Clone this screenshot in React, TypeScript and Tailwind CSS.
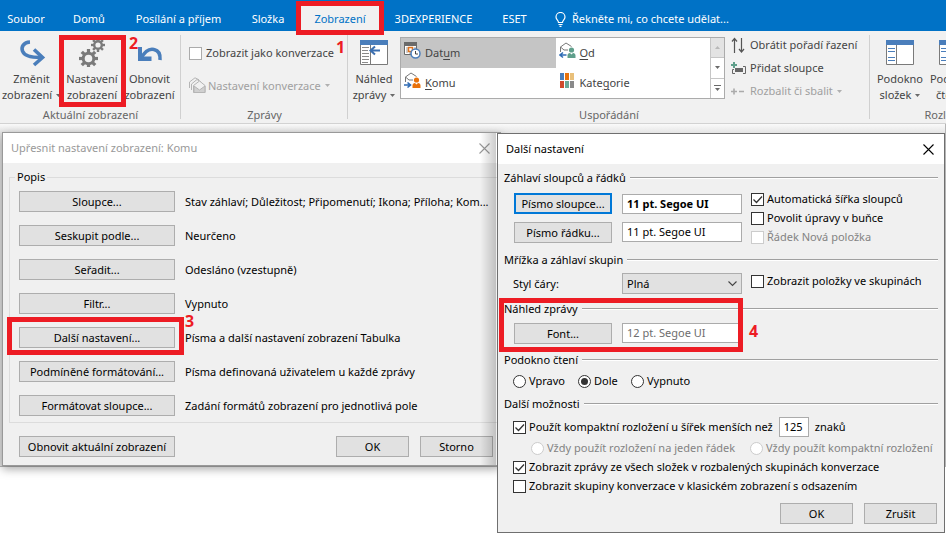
import * as React from "react";
import clsx from "clsx";

/* ---------- icons ---------- */

function Caret({ className = "fill-[#6a6a6a]" }: { className?: string }) {
  return (
    <svg width="5" height="3" viewBox="0 0 5 3" className={clsx("shrink-0", className)}>
      <path d="M0 0h5L2.5 3z" />
    </svg>
  );
}

function Gear({ cx, cy, r, hole }: { cx: number; cy: number; r: number; hole: number }) {
  const body = (r * 0.72 + hole) / 2;
  return (
    <g transform={`translate(${cx} ${cy})`}>
      <circle r={body} fill="none" stroke="#7a7a7a" strokeWidth={r * 0.72 - hole} />
      {[0, 45, 90, 135, 180, 225, 270, 315].map((a) => (
        <rect key={a} x={-r * 0.17} y={-r} width={r * 0.34} height={r * 0.4} fill="#7a7a7a" transform={`rotate(${a})`} />
      ))}
    </g>
  );
}

const ChangeIcon = () => (
  <svg width="28" height="28" viewBox="0 0 28 28" fill="none" stroke="#4a7ebb" strokeWidth="3.6">
    <path d="M12 3C5.500 3.300 3 8 4.500 12c1.500 4.500 7 6.500 18 6.500" />
    <path d="M16 10.500l8.500 8-8.500 7.500" />
  </svg>
);

const GearsIcon = () => (
  <svg width="28" height="28" viewBox="0 0 28 28">
    <Gear cx={20} cy={6} r={7} hole={2.6} />
    <Gear cx={10.5} cy={19.5} r={9.5} hole={3.8} />
  </svg>
);

const ResetIcon = () => (
  <svg width="28" height="28" viewBox="0 0 28 28" fill="none">
    <path d="M2 8h4v9.500h9.500V22H2z" fill="#4a7ebb" />
    <path d="M5 19.500C9 12 14 9.500 18 10.500c4.500 1 6.500 5 6 10.500" stroke="#4a7ebb" strokeWidth="3.6" />
  </svg>
);

const PreviewIcon = () => (
  <svg width="28" height="28" viewBox="0 0 28 28">
    <path d="M.5 1.500h27v24H.5z" fill="#fff" stroke="#7a7a7a" />
    <path d="M0 1h28v5H0z" fill="#4a7ebb" />
    <path d="M10.500 6v20" stroke="#7a7a7a" />
    <path d="M2 8.500h7M2 11.500h6M2 14.500h7M2 17.500h7M2 20.500h7M2 23.500h6" stroke="#8a8a8a" />
    <path d="M20 11.500h-9M15 7.500l-4.500 4 4.500 4" fill="none" stroke="#3b6fb0" strokeWidth="2" />
  </svg>
);

const PaneIcon = () => (
  <svg width="28" height="28" viewBox="0 0 28 28">
    <path d="M.5 1.500h27v24H.5z" fill="#fff" stroke="#7a7a7a" />
    <path d="M0 1h28v5H0z" fill="#4a7ebb" />
    <path d="M10.500 6v20" stroke="#7a7a7a" />
    <path d="M2 9.500h7M2 12.500h7M2 18.500h7M2 21.500h7" stroke="#4a7ebb" />
  </svg>
);

const DateIcon = () => (
  <svg width="17" height="17" viewBox="0 0 17 17">
    <path d="M.5.5h12v12H.5z" fill="#fff" stroke="#6a6a6a" />
    <path d="M0 0h13v4H0z" fill="#6a6a6a" />
    <path d="M2 6h2M2 8h2M2 10h2M10 6h2M5 11h3" stroke="#9a9a9a" />
    <path d="M4.500 5.500h4v4h-4z" fill="#fff" stroke="#e0721c" strokeWidth="1.5" />
    <circle cx="11.5" cy="11.5" r="4.5" fill="#fff" stroke="#4a7ebb" strokeWidth="1.5" />
    <path d="M11.500 9v3H14" fill="none" stroke="#444" />
  </svg>
);

function MailPerson({ color, incoming }: { color: string; incoming?: boolean }) {
  return (
    <svg width="17" height="17" viewBox="0 0 17 17" fill="none">
      <path d="M1.500 10V5L7 1l5.500 3.500M1.500 5L5 8h4" stroke="#777" />
      {incoming ? (
        <path d="M7.500 13H1M4 10.500L1 13l3 2.500" stroke="#2f6cb5" strokeWidth="1.6" />
      ) : (
        <path d="M0 13h6.500M3.500 10.500l3 2.500-3 2.500" stroke="#2f6cb5" strokeWidth="1.6" />
      )}
      <circle cx="12.5" cy="8" r="2.6" fill={color} />
      <path d="M8.500 16v-2.500c0-1.500 1-2.500 2.500-2.500l1.500 1.500L14 11c1.500 0 2.500 1 2.500 2.500V16z" fill={color} />
    </svg>
  );
}

const CategoryIcon = () => (
  <svg width="17" height="17" viewBox="0 0 17 17">
    <path d="M1 1h4v7H1z" fill="#4a7ebb" />
    <path d="M6 1h4v7H6z" fill="#e8720c" />
    <path d="M11 1h4v7h-4z" fill="#e9c07a" />
    <path d="M1 9h4v7H1z" fill="#cf4a2c" />
    <path d="M6 9h4v7H6z" fill="#6aa896" />
    <path d="M11 9h4v7h-4z" fill="#8a8a8a" />
  </svg>
);

const ConversationIcon = () => (
  <svg width="17" height="17" viewBox="0 0 17 17" fill="none" stroke="#b5b5b5">
    <path d="M.5 11V5L6 .8l4 2M2.500 13V7L8 2.500l4 2.500" />
    <path d="M4.500 8.500L10.500 4l5.500 4.500v7H4.500z" fill="#f1f1f1" />
    <path d="M5 9l5.500 4L16 9v6.500H5z" fill="#d0d0d0" />
  </svg>
);

const ReverseIcon = () => (
  <svg width="14" height="17" viewBox="0 0 14 17" fill="none" stroke="#555" strokeWidth="1.2">
    <path d="M3.500 16V1.500M1 4.500l2.500-3 2.500 3M10.500 1v14M8 12l2.500 3 2.500-3" />
  </svg>
);

const AddColumnIcon = () => (
  <svg width="16" height="15" viewBox="0 0 16 15" fill="none">
    <path d="M3 8.500H1.500v4H4M12 5.500h2.500v7H12" stroke="#666" />
    <path d="M4 7h8v4H4z" fill="#666" />
    <path d="M3 1v6M0 4h6" stroke="#5f9f8b" strokeWidth="2" />
  </svg>
);

const ExpandIcon = () => (
  <svg width="14" height="7" viewBox="0 0 14 7" stroke="#ababab" strokeWidth="1.6">
    <path d="M0 3.500h6M3 .5v6M8 3.500h5" />
  </svg>
);

const Bulb = () => (
  <svg width="11" height="15" viewBox="0 0 11 15" fill="none" stroke="#fff" strokeWidth="1.2">
    <path d="M3.500 10.500c0-2-2.500-2.700-2.500-5.500a4.400 4.400 0 0 1 9 0c0 2.800-2.500 3.500-2.500 5.500zM3.500 12.500h4M4.500 14.300h2" />
  </svg>
);

const Cross = ({ color }: { color: string }) => (
  <svg width="11" height="11" viewBox="0 0 11 11" fill="none" stroke={color} strokeWidth="1.1">
    <path d="M.5.5l10 10M10.500.5l-10 10" />
  </svg>
);

/* ---------- ribbon ---------- */

const TABS = [
  { label: "Soubor", w: "w-[52px] mr-1.5" },
  { label: "Domů", w: "w-[62px]" },
  { label: "Posílání a příjem", w: "w-[117px]" },
  { label: "Složka", w: "w-[62px]" },
  { label: "Zobrazení", w: "w-[82px]", active: true },
  { label: "3DEXPERIENCE", w: "w-[105px]" },
  { label: "ESET", w: "w-[57px]" },
];

function Mark({ n, className }: { n: string; className: string }) {
  return <span className={clsx("absolute z-10 text-[16px] leading-4 font-bold text-[#ed1c24]", className)}>{n}</span>;
}

function Frame({ className }: { className: string }) {
  return <div className={clsx("pointer-events-none absolute z-10 border-5 border-[#ed1c24]", className)} />;
}

function BigButton({ icon, top, bottom, caret, className, children }: {
  icon: React.ReactNode; top: string; bottom: string; caret?: boolean; className: string; children?: React.ReactNode;
}) {
  return (
    <div className={clsx("relative flex shrink-0 justify-center", className)}>
      <button className="flex flex-col items-center whitespace-nowrap">
        <span className="mb-1 h-7">{icon}</span>
        <span>{top}</span>
        <span className="flex items-center gap-1">
          {bottom}
          {caret && <Caret />}
        </span>
      </button>
      {children}
    </div>
  );
}

function Group({ label, className, children }: { label: string; className: string; children: React.ReactNode }) {
  return (
    <section className={clsx("relative flex shrink-0 flex-col", className)}>
      <div className="flex h-[76px]">{children}</div>
      <div className="h-4 text-center text-[#666]">{label}</div>
      <span className="absolute top-1 right-0 h-[84px] w-px bg-[#d0d0d0]" />
    </section>
  );
}

function GalleryItem({ icon, pre = "", hot = "", post, active }: {
  icon: React.ReactNode; pre?: string; hot?: string; post: string; active?: boolean;
}) {
  return (
    <button className={clsx("flex items-center gap-1 pl-[3px] text-left", active && "bg-[#c5c5c5]")}>
      <span className="pb-1.5">{icon}</span>
      <span>{pre}<u className="underline-offset-2">{hot}</u>{post}</span>
    </button>
  );
}

function Ribbon() {
  return (
    <header className="relative text-[#444]">
      <nav className="flex h-[31px] items-end overflow-hidden bg-[#0072c6] text-white">
        {TABS.map((t) => (
          <button key={t.label} className={clsx("h-[26px] shrink-0 pt-0.5 whitespace-nowrap", t.w, t.active && "bg-[#f1f1f1] text-[#0072c6]")}>
            {t.label}
          </button>
        ))}
        <button className="flex h-[26px] items-center gap-1.5 pt-0.5 pl-3 whitespace-nowrap">
          <Bulb /> Řekněte mi, co chcete udělat...
        </button>
      </nav>
      <Frame className="top-px left-[296px] h-[34px] w-[88px]" />

      <div className="flex overflow-hidden border-b border-[#d2d2d2] bg-[#f1f1f1]">
        <Group label="Aktuální zobrazení" className="w-[181px]">
          <BigButton icon={<ChangeIcon />} top="Změnit" bottom="zobrazení" caret className="w-[63px] pt-2" />
          <BigButton icon={<GearsIcon />} top="Nastavení" bottom="zobrazení" className="w-[58px] pt-2">
            <Frame className="top-1 -left-1 h-[72px] w-[67px]" />
          </BigButton>
          <BigButton icon={<ResetIcon />} top="Obnovit" bottom="zobrazení" className="w-[57px] pt-2">
            <Mark n="2" className="top-1 left-2" />
          </BigButton>
        </Group>

        <Group label="Zprávy" className="w-[167px]">
          <div className="relative flex flex-col gap-4 pt-3.5 pl-2">
            <label className="flex items-center gap-1 whitespace-nowrap">
              <input type="checkbox" className="size-[13px] appearance-none border border-[#ababab] bg-white" />
              Zobrazit jako konverzace
            </label>
            <button disabled className="flex items-center gap-0.5 whitespace-nowrap text-[#a0a0a0]">
              <ConversationIcon /> Nastavení konverzace <Caret className="ml-0.5 fill-[#b0b0b0]" />
            </button>
            <Mark n="1" className="top-2 left-[155px]" />
          </div>
        </Group>

        <Group label="Uspořádání" className="w-[522px]">
          <BigButton icon={<PreviewIcon />} top="Náhled" bottom="zprávy" caret className="w-[52px] pt-2" />
          <div className="mt-1.5 flex h-[62px] w-[325px] shrink-0 border border-[#ababab] bg-white">
            <div className="grid flex-1 grid-cols-2 grid-rows-2">
              <GalleryItem active icon={<DateIcon />} pre="Dat" hot="u" post="m" />
              <GalleryItem icon={<MailPerson color="#5f9f8b" incoming />} hot="O" post="d" />
              <GalleryItem icon={<MailPerson color="#e8720c" />} hot="K" post="omu" />
              <GalleryItem icon={<CategoryIcon />} pre="Kate" hot="g" post="orie" />
            </div>
            <div className="flex w-3.5 flex-col divide-y divide-[#c6c6c6] border-l border-[#c6c6c6]">
              <button aria-label="Nahoru" className="grid flex-1 place-items-center bg-[#e3e3e3]">
                <Caret className="rotate-180 fill-[#b8b8b8]" />
              </button>
              <button aria-label="Dolů" className="grid flex-1 place-items-center"><Caret /></button>
              <button aria-label="Další" className="flex flex-1 flex-col items-center justify-center gap-0.5">
                <span className="h-px w-[7px] bg-[#6a6a6a]" />
                <Caret />
              </button>
            </div>
          </div>
          <div className="flex flex-col gap-[7px] pt-1.5 pl-1.5 whitespace-nowrap">
            <button className="flex h-4 items-center"><span className="w-[19px]"><ReverseIcon /></span>Obrátit pořadí řazení</button>
            <button className="flex h-4 items-center"><span className="w-[19px]"><AddColumnIcon /></span>Přidat sloupce</button>
            <button disabled className="flex h-4 items-center text-[#a0a0a0]">
              <span className="w-[19px]"><ExpandIcon /></span>Rozbalit či sbalit <Caret className="ml-1 fill-[#b0b0b0]" />
            </button>
          </div>
        </Group>

        <Group label="Rozložení" className="w-[158px]">
          <BigButton icon={<PaneIcon />} top="Podokno" bottom="složek" caret className="w-[60px] pt-2" />
          <BigButton icon={<PaneIcon />} top="Podokno" bottom="čtení" caret className="w-[46px] pt-2" />
        </Group>
      </div>
    </header>
  );
}

/* ---------- dialog controls ---------- */

function PushButton({ children, className, focused }: { children: React.ReactNode; className: string; focused?: boolean }) {
  return (
    <button className={clsx(
      "flex h-[21px] items-center justify-center bg-[#e1e1e1] whitespace-nowrap",
      focused ? "border-2 border-[#0078d7]" : "border border-[#adadad]",
      className,
    )}>
      {children}
    </button>
  );
}

function Check({ label, checked, disabled }: { label: string; checked?: boolean; disabled?: boolean }) {
  return (
    <label className={clsx("flex h-4 items-center gap-[3px] whitespace-nowrap", disabled && "text-[#838383]")}>
      <span className="relative grid size-[13px] shrink-0">
        <input
          type="checkbox"
          defaultChecked={checked}
          disabled={disabled}
          className="peer size-[13px] appearance-none border border-[#333] bg-white disabled:border-[#ccc]"
        />
        <svg viewBox="0 0 13 13" className="pointer-events-none absolute inset-0 hidden peer-checked:block" fill="none" stroke="#333" strokeWidth="1.3">
          <path d="M2.500 6.500l3 3 5.500-6" />
        </svg>
      </span>
      {label}
    </label>
  );
}

function Radio({ label, name, checked, disabled, className }: { label: string; name: string; checked?: boolean; disabled?: boolean; className?: string }) {
  return (
    <label className={clsx("flex h-4 items-center gap-[3px] whitespace-nowrap", disabled && "text-[#838383]", className)}>
      <span className="relative grid size-[13px] shrink-0">
        <input
          type="radio"
          name={name}
          defaultChecked={checked}
          disabled={disabled}
          className="peer size-[13px] appearance-none rounded-full border border-[#333] bg-white disabled:border-[#ccc]"
        />
        <span className="pointer-events-none absolute inset-[3px] hidden rounded-full bg-[#333] peer-checked:block" />
      </span>
      {label}
    </label>
  );
}

function TitleBar({ title, inactive }: { title: string; inactive?: boolean }) {
  return (
    <div className={clsx("flex h-[30px] items-center justify-between bg-white pr-2.5 pl-2", inactive ? "text-[#999]" : "text-black")}>
      <h2>{title}</h2>
      <button aria-label="Zavřít">
        <Cross color={inactive ? "#999" : "#000"} />
      </button>
    </div>
  );
}

function Heading({ children, className }: { children: React.ReactNode; className?: string }) {
  return (
    <h3 className={clsx("flex h-4 items-center gap-1 whitespace-nowrap", className)}>
      {children}
      <span className="h-0.5 flex-1 border-t border-[#a0a0a0] bg-white" />
    </h3>
  );
}

const FIELD = "h-5 border border-[#ababab] bg-white px-1 pb-0.5";

/* ---------- dialogs ---------- */

const ROWS = [
  ["Sloupce...", "Stav záhlaví; Důležitost; Připomenutí; Ikona; Příloha; Kom..."],
  ["Seskupit podle...", "Neurčeno"],
  ["Seřadit...", "Odesláno (vzestupně)"],
  ["Filtr...", "Vypnuto"],
  ["Další nastavení...", "Písma a další nastavení zobrazení Tabulka"],
  ["Podmíněné formátování...", "Písma definovaná uživatelem u každé zprávy"],
  ["Formátovat sloupce...", "Zadání formátů zobrazení pro jednotlivá pole"],
];

function AdvancedView() {
  return (
    <div className="absolute top-[132px] left-0.5 w-[499px] border border-[#999] bg-[#f0f0f0] shadow-[0_3px_9px_rgba(0,0,0,0.35)]">
      <TitleBar title="Upřesnit nastavení zobrazení: Komu" inactive />
      <div className="pt-1.5 pr-[7px] pb-2 pl-1.5">
        <fieldset className="border border-[#dcdcdc] px-[9px] pb-1.5">
          <legend className="-ml-1 h-4 px-0.5">Popis</legend>
          <div className="flex flex-col gap-[13px] pt-1.5">
            {ROWS.map(([button, text], i) => (
              <div key={button} className="relative flex items-center gap-2.5 whitespace-nowrap">
                <PushButton className="w-[156px]">{button}</PushButton>
                {text}
                {i === 4 && (
                  <>
                    <Frame className="-top-2.5 -left-3 h-[38px] w-[177px]" />
                    <Mark n="3" className="-top-3.5 left-[166px]" />
                  </>
                )}
              </div>
            ))}
          </div>
        </fieldset>
        <div className="mt-[13px] flex gap-[11px] pl-2.5">
          <PushButton className="mr-auto w-[156px]">Obnovit aktuální zobrazení</PushButton>
          <PushButton className="w-[73px]">OK</PushButton>
          <PushButton className="w-[73px]">Storno</PushButton>
        </div>
      </div>
      {/* shade thrown by the dialog in front */}
      <div className="pointer-events-none absolute inset-y-0 right-1 w-4 bg-linear-to-r from-transparent to-black/20" />
    </div>
  );
}

function OtherSettings() {
  return (
    <div className="absolute top-[133px] left-[497px] w-[448px] border border-[#6f6f6f] bg-[#f0f0f0]">
      <TitleBar title="Další nastavení" />
      <div className="px-1.5 pt-1.5 pb-2">
        <Heading>Záhlaví sloupců a řádků</Heading>
        <div className="mt-[7px] flex pl-2.5">
          <div className="flex w-[108px] flex-col gap-2">
            <PushButton focused className="w-[98px]">Písmo sloupce...</PushButton>
            <PushButton className="w-[98px]">Písmo řádku...</PushButton>
          </div>
          <div className="flex w-[129px] flex-col gap-2 pt-px">
            <input aria-label="Písmo sloupce" readOnly defaultValue="11 pt. Segoe UI" className={clsx(FIELD, "w-[120px] font-bold")} />
            <input aria-label="Písmo řádku" readOnly defaultValue="11 pt. Segoe UI" className={clsx(FIELD, "w-[120px]")} />
          </div>
          <div className="-mt-0.5 flex flex-col gap-[3px]">
            <Check label="Automatická šířka sloupců" checked />
            <Check label="Povolit úpravy v buňce" />
            <Check label="Řádek Nová položka" disabled />
          </div>
        </div>

        <Heading className="mt-[7px]">Mřížka a záhlaví skupin</Heading>
        <div className="mt-[5px] flex pl-[9px]">
          <label htmlFor="line-style" className="w-[109px] pt-[3px]">Styl čáry:</label>
          <div className="relative w-[129px]">
            <select id="line-style" className="h-[21px] w-[120px] appearance-none border border-[#adadad] bg-[#e1e1e1] pl-1">
              <option>Plná</option>
            </select>
            <svg width="9" height="6" viewBox="0 0 9 6" className="pointer-events-none absolute top-2 right-3.5" fill="none" stroke="#444" strokeWidth="1.1">
              <path d="M.5.5l4 4 4-4" />
            </svg>
          </div>
          <Check label="Zobrazit položky ve skupinách" />
        </div>

        <div className="relative mt-[7px]">
          <Heading>Náhled zprávy</Heading>
          <div className="mt-1.5 flex gap-2.5 pl-2.5">
            <PushButton className="w-[98px]">Font...</PushButton>
            <input aria-label="Font náhledu" readOnly defaultValue="12 pt. Segoe UI" className={clsx(FIELD, "w-[120px] text-[#6d6d6d]")} />
          </div>
          <Frame className="-top-[3px] -left-[5px] h-[54px] w-[244px]" />
          <Mark n="4" className="top-[22px] left-[245px]" />
        </div>

        <Heading className="mt-2">Podokno čtení</Heading>
        <div className="mt-[5px] flex pl-[9px]">
          <Radio name="pane" label="Vpravo" className="w-[65px]" />
          <Radio name="pane" label="Dole" checked className="w-[53px]" />
          <Radio name="pane" label="Vypnuto" />
        </div>

        <Heading className="mt-[7px]">Další možnosti</Heading>
        <div className="mt-[5px] flex flex-col gap-[3px] pl-[9px]">
          <div className="flex h-5 items-center gap-1.5 whitespace-nowrap">
            <Check label="Použít kompaktní rozložení u šířek menších než" checked />
            <input aria-label="Počet znaků" defaultValue="125" className={clsx(FIELD, "w-[30px]")} />
            znaků
          </div>
          <div className="flex pl-[18px]">
            <Radio name="layout" label="Vždy použít rozložení na jeden řádek" disabled className="w-[219px]" />
            <Radio name="layout" label="Vždy použít kompaktní rozložení" disabled />
          </div>
          <Check label="Zobrazit zprávy ze všech složek v rozbalených skupinách konverzace" checked />
          <Check label="Zobrazit skupiny konverzace v klasickém zobrazení s odsazením" />
        </div>

        <div className="mt-[9px] flex justify-end gap-[11px] pr-px">
          <PushButton className="w-[73px]">OK</PushButton>
          <PushButton className="w-[73px]">Zrušit</PushButton>
        </div>
      </div>
    </div>
  );
}

export default function App() {
  return (
    <div className="relative min-h-screen overflow-hidden bg-white font-['Noto_Sans','Open_Sans',sans-serif] text-[11px] leading-4 text-black">
      <Ribbon />
      {/* mail list behind the dialogs, only its edges stay visible */}
      <main className="h-[343px] border-r border-b border-[#b5b5b5] bg-linear-to-b from-[#fafafa] to-[#e2e2e2] to-[10px]" />
      <AdvancedView />
      <OtherSettings />
    </div>
  );
}
